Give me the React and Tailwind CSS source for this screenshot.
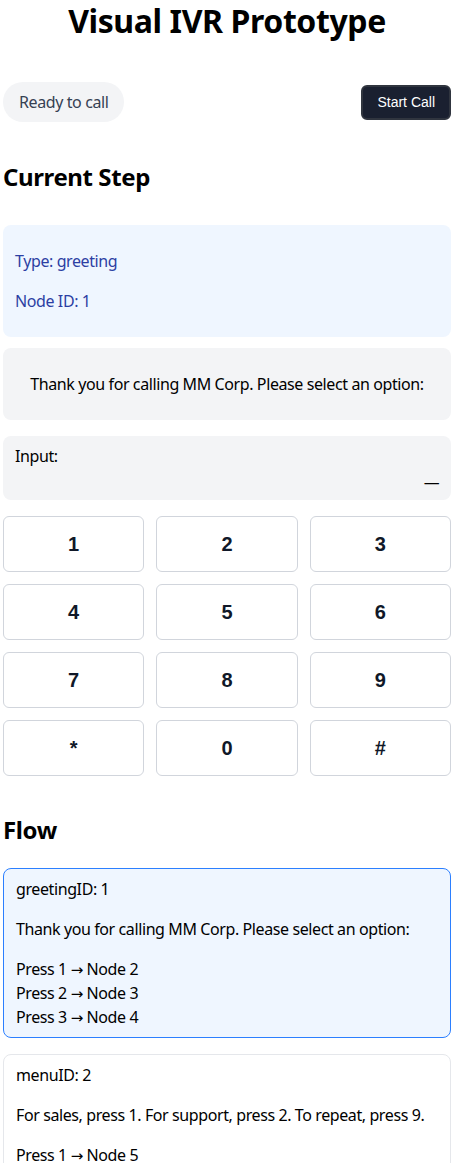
import { useState } from "react";

const keys = ["1", "2", "3", "4", "5", "6", "7", "8", "9", "*", "0", "#"];

const flow = [
  {
    id: 1,
    type: "greeting",
    message: "Thank you for calling MM Corp. Please select an option:",
    options: [
      ["1", 2],
      ["2", 3],
      ["3", 4],
    ],
  },
  {
    id: 2,
    type: "menu",
    message: "For sales, press 1. For support, press 2. To repeat, press 9.",
    options: [
      ["1", 5],
      ["2", 6],
      ["9", 2],
    ],
  },
];

const App = () => {
  const [input, setInput] = useState("");
  const current = flow[0];

  return (
    <div className="px-[3px] w-[454px] text-black tracking-tight font-['Segoe_UI','Noto_Sans',sans-serif]">
      <h1 className="mt-px text-center text-[32px] leading-10 font-bold">Visual IVR Prototype</h1>

      {/* Status bar */}
      <div className="mt-[41px] flex items-center justify-between">
        <div className="px-4 py-2 rounded-full bg-gray-100 text-gray-700 text-base leading-6">
          Ready to call
        </div>
        <button className="h-[35px] px-[14px] rounded-md bg-[#1a2030] border-2 border-[#30353f] text-white text-sm font-medium tracking-normal font-['Liberation_Sans',Arial,sans-serif]">
          Start Call
        </button>
      </div>

      <h2 className="mt-[39px] text-2xl leading-8 font-bold">Current Step</h2>

      {/* Current node */}
      <div className="mt-8 px-3 py-2 rounded-lg bg-blue-50 text-[#2c3fa3] leading-6">
        <p className="my-4">Type: {current.type}</p>
        <p className="my-4">Node ID: {current.id}</p>
      </div>

      <div className="mt-[11px] px-3 py-2 rounded-lg bg-gray-100 text-center leading-6">
        <p className="my-4">{current.message}</p>
      </div>

      <div className="mt-4 px-3 py-2 rounded-lg bg-gray-100 leading-6">
        <p>Input:</p>
        <div className="h-6 text-right text-2xl leading-[16px] font-bold tracking-normal font-['Liberation_Mono',monospace]">
          {input || "_"}
        </div>
      </div>

      {/* Keypad */}
      <div className="mt-4 grid grid-cols-3 gap-3">
        {keys.map((k) => (
          <button
            key={k}
            onClick={() => setInput(input + k)}
            className="h-14 rounded-md border border-gray-300 bg-white text-xl font-bold text-gray-900 tracking-normal font-['Liberation_Sans',Arial,sans-serif]"
          >
            {k}
          </button>
        ))}
      </div>

      <h2 className="mt-[38px] text-2xl leading-8 font-bold">Flow</h2>

      <div className="mt-[22px] space-y-4">
        {flow.map((node, i) => (
          <div
            key={node.id}
            className={`px-3 py-2 rounded-lg border leading-6 ${
              i === 0 ? "bg-blue-50 border-blue-500" : "bg-white border-gray-200"
            }`}
          >
            <div>
              {node.type}ID: {node.id}
            </div>
            <p className="my-4">{node.message}</p>
            <div>
              {node.options.map(([digit, next]) => (
                <div key={digit} className="h-6">
                  Press {digit}{" "}
                  <span className="leading-none font-['DejaVu_Sans',sans-serif] text-[15px]">→</span>{" "}
                  Node {next}
                </div>
              ))}
            </div>
          </div>
        ))}
      </div>
    </div>
  );
};

export default App;
